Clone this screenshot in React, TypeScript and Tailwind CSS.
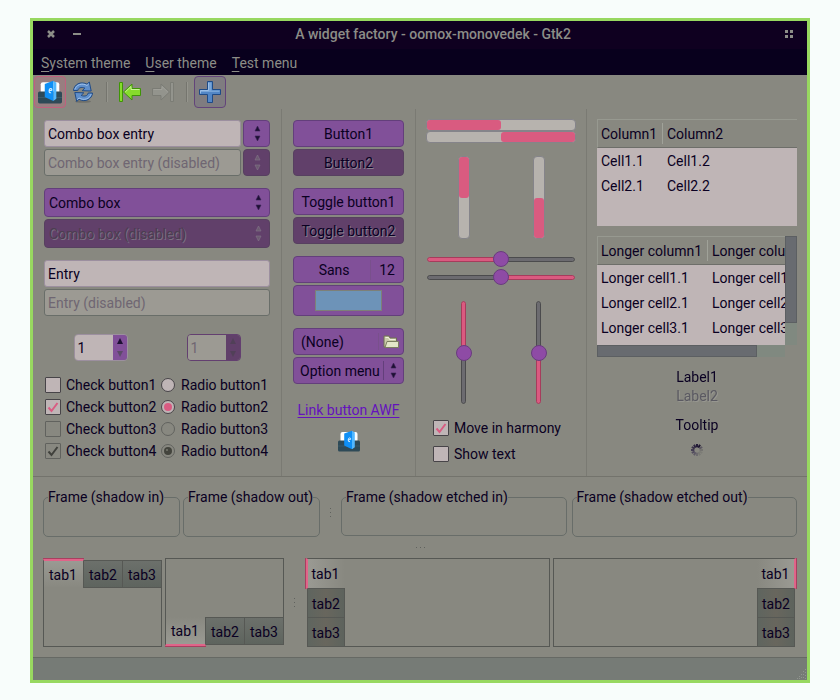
import React, { useState } from "react";

type Kids = { children?: React.ReactNode };

const emboss = "[text-shadow:1px_1px_0_#8a8090]";

/* ---------- small drawings ---------- */

function UpDown({ dim = false, className = "" }: { dim?: boolean; className?: string }) {
  return (
    <svg width="9" height="17" viewBox="0 0 9 17" aria-hidden="true" className={className}>
      <path d="M4.500 1 7 6H2z" fill={dim ? "#6b5a70" : "#1d1033"} stroke={dim ? "#85758a" : "#3b2258"} strokeWidth="0.6" />
      <path d="M4.500 16 7 11H2z" fill={dim ? "#6b5a70" : "#1d1033"} stroke={dim ? "#85758a" : "#3b2258"} strokeWidth="0.6" />
    </svg>
  );
}

function DoorIcon({ size = 22 }: { size?: number }) {
  return (
    <svg width={size} height={size} viewBox="0 0 22 22" aria-hidden="true">
      <rect x="2.500" y="2" width="17" height="11" rx="2" fill="#fdfdfd" />
      <path d="M0 12Q0 10.500 1.500 10.500h19q1.500 0 1.500 1.500v8q0 1.500-1.500 1.500h-19Q0 21.500 0 20z" fill="#2e4a57" />
      <path d="M0 15.600h22v.8H0z" fill="#3d5f6d" />
      <path d="M6.200 3.600 14 .8v18.400L6.200 15.600z" fill="#0f8ff5" />
      <path d="M14 .8l2.800 1.800v14.600L14 19.200z" fill="#52b8ff" />
      <path d="M12 11.600q-1.800.6-1.800-1.600t1.600-2.100q1.200.2.8 1.500l-2.200.5" stroke="#d8f0ff" strokeWidth="1" fill="none" />
    </svg>
  );
}

function RefreshIcon() {
  return (
    <svg width="22" height="22" viewBox="0 0 22 22" aria-hidden="true">
      <ellipse cx="11" cy="20.500" rx="8" ry="1.300" fill="#70706a" />
      <g stroke="#1f4a86" strokeWidth="1" strokeLinejoin="round" fill="#5f8fcb">
        <path d="M1.500 9.500C2 3.500 8.500-.2 15 3.200L17.300 1l1.900 9-9-.3 2.600-2.600C9.300 5.600 6.300 6.800 5.800 9.500z" />
        <path d="M20.500 12c-.5 6-7 9.700-13.500 6.300L4.700 20.500l-1.900-9 9 .3-2.600 2.600c3.500 1.500 6.500.3 7-2.400z" />
      </g>
      <path d="M2.800 8.500C4.200 3.800 9.800 1.500 15 4.500l1.700-1.600M19.200 13c-1.400 4.700-7 7-12.200 4l-1.700 1.600" stroke="#a6c6ec" strokeWidth="0.9" fill="none" />
    </svg>
  );
}

function JumpArrow({ kind }: { kind: "first" | "last" }) {
  const live = kind === "first";
  return (
    <svg width="24" height="22" viewBox="0 0 24 22" aria-hidden="true" className={live ? "" : "-scale-x-100 opacity-60"}>
      <g fill={live ? "#86dc2c" : "#9b9c96"} stroke={live ? "#3f9406" : "#73756f"} strokeWidth="1" strokeLinejoin="round">
        <path d="M1.500 1.500h3v19h-3z" />
        <path d="M5.500 11 14 3v4.500h8.500v7H14V19z" />
      </g>
      <path d="M7.200 11 13 5.500v3h8.500" stroke={live ? "#c9f596" : "#b0b1ab"} strokeWidth="1" fill="none" />
    </svg>
  );
}

function PlusIcon() {
  return (
    <svg width="22" height="22" viewBox="0 0 22 22" aria-hidden="true">
      <path d="M8.500.5h5v8h8v5h-8v8h-5v-8h-8v-5h8z" fill="#5286c6" stroke="#1f4a86" />
      <path d="M9.500 1.500h3v8h8v1.500h-19V9.500h8z" fill="#79a5d8" />
      <path d="M9.500 1.500v8h-8v3" stroke="#a9c8ec" fill="none" strokeWidth="0.800" />
    </svg>
  );
}

function FolderIcon() {
  return (
    <svg width="16" height="14" viewBox="0 0 16 14" aria-hidden="true">
      <path d="M1 1h5l1 2h6.500v9H1z" fill="#c9cba8" stroke="#6f7153" />
      <path d="M2 12.500 4 6.500h11.500v6z" fill="#e3e5c8" stroke="#7b7d60" />
      <path d="M2.500 2.500h3l1 2h6" stroke="#f1f2de" fill="none" />
    </svg>
  );
}

function SpinnerIcon() {
  const shades = ["#241c38", "#1c1430", "#5a5660", "#747370", "#7c7c76", "#787874", "#6c6a6e", "#5f5b66", "#524c5e", "#453e54", "#393148", "#2e2540"];
  return (
    <svg width="12" height="12" viewBox="0 0 12 12" role="img" aria-label="Working">
      {shades.map((c, i) => (
        <path key={i} d="M6 0v3.300" stroke={c} strokeWidth="2" transform={`rotate(${i * 30} 6 6)`} />
      ))}
    </svg>
  );
}

/* ---------- controls ---------- */

function PushButton({ children, dim = false, className = "" }: Kids & { dim?: boolean; className?: string }) {
  const tone = dim ? "bg-[#61406a] border-[#574060] " + emboss : "bg-[#815099] border-[#633f7b]";
  return (
    <button type="button" className={`flex h-[27px] w-full items-center justify-center rounded-[4px] border whitespace-nowrap ${tone} ${className}`}>
      {children}
    </button>
  );
}

function TextEntry({ label, disabled = false }: { label: string; disabled?: boolean }) {
  return (
    <input
      type="text"
      aria-label={label}
      defaultValue={label}
      disabled={disabled}
      className={`h-[27px] w-full min-w-0 rounded-[3px] border px-[3px] ${
        disabled ? "border-[#696e69] bg-[#9c9a93] text-[#6f6672]" : "border-[#9c8f9f] bg-[#bfb5b6]"
      }`}
    />
  );
}

function ComboEntry({ label, disabled = false }: { label: string; disabled?: boolean }) {
  return (
    <div className="flex gap-[2px]">
      <TextEntry label={label} disabled={disabled} />
      <button
        type="button"
        aria-label={`${label} options`}
        disabled={disabled}
        className={`flex h-[27px] w-[27px] shrink-0 items-center justify-center rounded-[4px] border pl-px ${
          disabled ? "border-[#574060] bg-[#61406a]" : "border-[#633f7b] bg-[#815099]"
        }`}
      >
        <UpDown dim={disabled} />
      </button>
    </div>
  );
}

function Combo({ label, disabled = false }: { label: string; disabled?: boolean }) {
  return (
    <div className="grid items-center">
      <select
        aria-label={label}
        disabled={disabled}
        className={`col-start-1 row-start-1 h-[29px] w-full appearance-none rounded-[4px] border px-1 opacity-100 ${
          disabled
            ? "border-[#574060] bg-[#61406a] text-[#4b3d50] [text-shadow:1px_1px_0_#7d7082]"
            : "border-[#633f7b] bg-[#815099]"
        }`}
      >
        <option>{label}</option>
      </select>
      <UpDown dim={disabled} className="pointer-events-none col-start-1 row-start-1 mr-[7px] justify-self-end" />
    </div>
  );
}

function Spin({ disabled = false }: { disabled?: boolean }) {
  const [value, setValue] = useState(1);
  const up = disabled ? "#514058" : "#1d1033";
  const down = disabled ? "#514058" : "#5b4a68";
  return (
    <div className={`flex h-[27px] w-[54px] overflow-hidden rounded-[4px] border ${disabled ? "border-[#633f70] text-[#6f6672]" : "border-[#9c8f9f]"}`}>
      <input
        type="text"
        aria-label={disabled ? "Number (disabled)" : "Number"}
        value={value}
        onChange={(e) => setValue(Number(e.target.value) || 0)}
        disabled={disabled}
        className={`w-full min-w-0 px-[3px] ${disabled ? "bg-[#9c9a93]" : "bg-[#bfb5b6]"}`}
      />
      <div className={`flex w-[14px] shrink-0 flex-col ${disabled ? "bg-[#61406a]" : "bg-[#815099]"}`}>
        <button type="button" aria-label="Increase" disabled={disabled} onClick={() => setValue(value + 1)} className="flex flex-1 items-center justify-center">
          <svg width="6" height="6" viewBox="0 0 6 6"><path d="M3 0 6 6H0z" fill={up} /></svg>
        </button>
        <button type="button" aria-label="Decrease" disabled={disabled} onClick={() => setValue(value - 1)} className="flex flex-1 items-center justify-center">
          <svg width="6" height="6" viewBox="0 0 6 6"><path d="M3 6 6 0H0z" fill={down} /></svg>
        </button>
      </div>
    </div>
  );
}

function Check({ label, checked = false, disabled = false }: { label: string; checked?: boolean; disabled?: boolean }) {
  return (
    <label className="flex items-center gap-[5px] whitespace-nowrap">
      <span className="grid size-4 shrink-0">
        <input
          type="checkbox"
          defaultChecked={checked}
          disabled={disabled}
          className={`peer col-start-1 row-start-1 size-4 appearance-none rounded-[1px] border ${
            disabled ? "border-[#61625e]" : "border-[#474448] bg-[#bfb5b6]"
          }`}
        />
        <svg viewBox="0 0 16 16" aria-hidden="true" className="pointer-events-none invisible col-start-1 row-start-1 size-4 peer-checked:visible">
          <path d="M3.500 8.500 6.500 12 12.500 4" fill="none" stroke={disabled ? "#40413c" : "#d95b82"} strokeWidth="2" />
        </svg>
      </span>
      {label}
    </label>
  );
}

function Radio({ label, name, checked = false, disabled = false }: { label: string; name: string; checked?: boolean; disabled?: boolean }) {
  return (
    <label className="flex items-center gap-[6px] whitespace-nowrap">
      <span className="grid size-[14px] shrink-0">
        <input
          type="radio"
          name={name}
          defaultChecked={checked}
          disabled={disabled}
          className={`peer col-start-1 row-start-1 size-[14px] appearance-none rounded-full border ${
            disabled ? "border-[#61625e]" : "border-[#474448] bg-[#bfb5b6]"
          }`}
        />
        <svg viewBox="0 0 14 14" aria-hidden="true" className="pointer-events-none invisible col-start-1 row-start-1 size-[14px] peer-checked:visible">
          <circle cx="7" cy="7" r="4" fill={disabled ? "#43443d" : "#d95b82"} />
          {disabled && <circle cx="6" cy="6" r="1" fill="#77786f" />}
        </svg>
      </span>
      {label}
    </label>
  );
}

function Progress({ label, vertical = false, reverse = false }: { label: string; vertical?: boolean; reverse?: boolean }) {
  return (
    <div
      role="progressbar"
      aria-label={label}
      aria-valuenow={50}
      className={`flex rounded-[4px] border border-[#85848a] bg-[#b7b3ae] ${vertical ? "h-[83px] w-3 flex-col" : "h-3 w-full"} ${
        reverse ? "justify-end" : "justify-start"
      }`}
    >
      <div className={`rounded-[3px] bg-[#d95b80] ${vertical ? "h-1/2 w-full" : "h-full w-1/2"}`} />
    </div>
  );
}

const thumb =
  "[&::-webkit-slider-thumb]:size-4 [&::-webkit-slider-thumb]:appearance-none [&::-webkit-slider-thumb]:rounded-full [&::-webkit-slider-thumb]:border [&::-webkit-slider-thumb]:border-[#693c7e] [&::-webkit-slider-thumb]:bg-[#8e4ba5]";

function Slider({ label, vertical = false, reverse = false }: { label: string; vertical?: boolean; reverse?: boolean }) {
  const full = "flex-1 border border-[#a63c5c] bg-[#da5a80]";
  const empty = "flex-1 border border-[#4b4b4d] bg-[#6c6b70]";
  return (
    <div className={`grid place-items-center ${vertical ? "h-[103px] w-4" : "h-4 w-full"}`}>
      <div className={`col-start-1 row-start-1 flex overflow-hidden rounded-[3px] ${vertical ? "h-[103px] w-[5px] flex-col" : "h-[5px] w-full"}`}>
        <div className={`${vertical ? "rounded-t-[3px]" : "rounded-l-[3px]"} ${reverse ? empty : full}`} />
        <div className={`${vertical ? "rounded-b-[3px]" : "rounded-r-[3px]"} ${reverse ? full : empty}`} />
      </div>
      <input
        type="range"
        aria-label={label}
        defaultValue={50}
        className={`col-start-1 row-start-1 m-0 appearance-none bg-transparent ${thumb} ${
          vertical ? "h-[103px] w-4 [writing-mode:vertical-lr]" : "h-4 w-full"
        }`}
      />
    </div>
  );
}

/* ---------- data tables ---------- */

function DataTable({ head, rows, first }: { head: string[]; rows: string[][]; first: string }) {
  return (
    <table className="w-full border-separate border-spacing-0 text-left whitespace-nowrap">
      <thead className="bg-[#888880]">
        <tr>
          {head.map((h, i) => (
            <th key={h} className={`h-[29px] border-t border-b border-t-[#979990] border-b-[#6d6e69] p-0 font-normal ${i === 0 ? "border-l border-l-[#979990] " + first : ""}`}>
              <div className={`h-[21px] pt-px ${i === 0 ? "border-r border-[#a0a299] pl-[3px]" : "pl-1"}`}>{h}</div>
            </th>
          ))}
        </tr>
      </thead>
      <tbody>
        {rows.map((r) => (
          <tr key={r[0]}>
            {r.map((c) => (
              <td key={c} className="h-[25px] p-0 pl-1">{c}</td>
            ))}
          </tr>
        ))}
      </tbody>
    </table>
  );
}

/* ---------- notebooks ---------- */

const edge = "border-[#565854]";

function TopNotebook({ flip = false }: { flip?: boolean }) {
  const idle = `h-[28px] w-[39px] border-y border-r pt-px ${edge} bg-linear-to-b from-[#6c706b] to-[#5e645e]`;
  return (
    <div className={`flex h-[89px] min-w-0 ${flip ? "flex-col-reverse" : "flex-col"}`}>
      <div role="tablist" className={`flex h-[30px] ${flip ? "items-start" : "items-end"}`}>
        <div className={`flex h-[30px] w-[41px] border-[#a83f60] ${flip ? "border-b" : "border-t"}`}>
          <button
            type="button"
            role="tab"
            aria-selected="true"
            className={`w-full border-x border-x-[#565854] border-y-[#e06489] pr-px ${
              flip
                ? "border-b-2 bg-linear-to-t from-[#9a9a93] to-[#888880] pt-px"
                : "border-t-2 bg-linear-to-b from-[#9a9a93] to-[#888880]"
            }`}
          >
            tab1
          </button>
        </div>
        <button type="button" role="tab" className={idle}>tab2</button>
        <button type="button" role="tab" className={idle}>tab3</button>
        <div className={`h-[30px] flex-1 ${flip ? "border-t" : "border-b"} ${edge}`} />
      </div>
      <div className={`flex-1 border-x ${flip ? "border-t" : "border-b"} ${edge}`} />
    </div>
  );
}

function SideNotebook({ flip = false }: { flip?: boolean }) {
  const idle = `h-[29px] w-[38px] border-x border-b pt-px ${edge} bg-linear-to-r from-[#5f655f] via-[#68665d] to-[#5d635d]`;
  return (
    <div className={`flex h-[89px] min-w-0 ${flip ? "flex-row-reverse" : "flex-row"}`}>
      <div role="tablist" className={`flex w-[40px] shrink-0 flex-col ${flip ? "items-start" : "items-end"}`}>
        <div className={`flex h-[31px] w-full border-[#a83f60] ${flip ? "border-r" : "border-l"}`}>
          <button
            type="button"
            role="tab"
            aria-selected="true"
            className={`w-full border-y border-y-[#565854] ${
              flip
                ? "border-r-2 border-r-[#e06489] bg-linear-to-l from-[#9a9a93] to-[#888880]"
                : "border-l-2 border-l-[#e06489] bg-linear-to-r from-[#9a9a93] to-[#888880] pr-[2px]"
            }`}
          >
            tab1
          </button>
        </div>
        <button type="button" role="tab" className={idle}>tab2</button>
        <button type="button" role="tab" className={idle}>tab3</button>
      </div>
      <div className={`flex-1 border-y ${flip ? "border-l" : "border-r"} ${edge}`} />
    </div>
  );
}

function Frame({ title, className }: { title: string; className: string }) {
  return (
    <fieldset className={`min-w-0 rounded-[5px] border border-[#686d69] pl-1 ${className}`}>
      <legend className="h-5 whitespace-nowrap">{title}</legend>
    </fieldset>
  );
}

function Grip({ across = false }: { across?: boolean }) {
  return (
    <div className={`flex items-center justify-center gap-[3px] ${across ? "h-[21px]" : "flex-col"}`}>
      <i className="size-px bg-[#60625e]" />
      <i className="size-px bg-[#60625e]" />
      <i className="size-px bg-[#60625e]" />
    </div>
  );
}

function MenuItem({ text }: { text: string }) {
  return (
    <button type="button" className="pl-2 pr-[7px] whitespace-nowrap">
      <span className="underline underline-offset-3">{text[0]}</span>
      {text.slice(1)}
    </button>
  );
}

function ToolSeparator() {
  return (
    <div className="flex w-[13px] justify-center">
      <div className="h-5 w-[2px] border-l border-[#75756e] bg-[#96968e]" />
    </div>
  );
}

export default function App() {
  return (
    <div className="min-h-screen bg-[#f8fdfb] px-[30px] pt-[18px] pb-[17px] font-['Roboto',sans-serif] text-[14px] leading-5 text-[#0a0022]">
      <main className="border-[3px] border-[#98d860] bg-[#888880]">
        <header className="flex h-7 items-center bg-[#0f0020] pb-[2px] text-[#8c8d87]">
          <div className="flex w-[61px] items-center gap-[18px] pl-[14px]">
            <button type="button" aria-label="Close">
              <svg width="8" height="8" viewBox="0 0 8 8"><path d="M1 1 7 7M7 1 1 7" stroke="currentColor" strokeWidth="2.500" /></svg>
            </button>
            <button type="button" aria-label="Minimize">
              <svg width="8" height="8" viewBox="0 0 8 8"><path d="M0 4h8" stroke="currentColor" strokeWidth="2" /></svg>
            </button>
          </div>
          <h1 className="flex-1 text-center font-medium whitespace-nowrap">A widget factory - oomox-monovedek - Gtk2</h1>
          <div className="flex w-[35px] pl-[13px]">
            <button type="button" aria-label="Maximize">
              <svg width="8" height="8" viewBox="0 0 8 8" fill="currentColor"><path d="M0 0h3v3H0zM5 0h3v3H5zM0 5h3v3H0zM5 5h3v3H5z" /></svg>
            </button>
          </div>
        </header>

        <nav className="flex h-[26px] items-center bg-[#08001d] pt-[2px] text-[#8c8d87]">
          <MenuItem text="System theme" />
          <MenuItem text="User theme" />
          <MenuItem text="Test menu" />
        </nav>

        <div role="toolbar" className="flex h-[34px] items-center gap-px pl-px">
          <button type="button" aria-label="Theme" className="flex size-8 items-center justify-center rounded-[4px] border border-[#c0607e] bg-[#987e80]">
            <DoorIcon size={24} />
          </button>
          <button type="button" aria-label="Refresh" className="flex size-8 items-center justify-center"><RefreshIcon /></button>
          <ToolSeparator />
          <button type="button" aria-label="Go first" className="flex size-8 items-center justify-center"><JumpArrow kind="first" /></button>
          <button type="button" aria-label="Go last" disabled className="flex size-8 items-center justify-center"><JumpArrow kind="last" /></button>
          <ToolSeparator />
          <button type="button" aria-label="Add" aria-pressed="true" className="flex size-8 items-center justify-center rounded-[4px] border border-[#63447a] bg-[#7f7c80]">
            <PlusIcon />
          </button>
        </div>

        <div className="grid grid-cols-[249fr_134fr_171fr_220fr] border-b border-[#73736c]">
          <section className="min-w-0 border-r border-[#7a7a73] px-[11px] pt-[11px] pb-[14px]">
            <div className="flex flex-col gap-3">
              <div className="flex flex-col gap-[2px]">
                <ComboEntry label="Combo box entry" />
                <ComboEntry label="Combo box entry (disabled)" disabled />
              </div>
              <div className="flex flex-col gap-[2px]">
                <Combo label="Combo box" />
                <Combo label="Combo box (disabled)" disabled />
              </div>
              <div className="flex flex-col gap-[2px]">
                <TextEntry label="Entry" />
                <TextEntry label="Entry (disabled)" disabled />
              </div>
            </div>
            <div className="mt-[18px] grid grid-cols-2 justify-items-center">
              <Spin />
              <Spin disabled />
            </div>
            <div className="mt-[13px] grid auto-rows-[22px] grid-cols-[116px_auto] items-center pl-px">
              <Check label="Check button1" />
              <Radio name="live" label="Radio button1" />
              <Check label="Check button2" checked />
              <Radio name="live" label="Radio button2" checked />
              <Check label="Check button3" disabled />
              <Radio name="off" label="Radio button3" disabled />
              <Check label="Check button4" checked disabled />
              <Radio name="off" label="Radio button4" checked disabled />
            </div>
          </section>

          <section className="min-w-0 border-r border-[#7a7a73] px-[11px] pt-[11px]">
            <div className="flex flex-col gap-3">
              <div className="flex flex-col gap-[2px]">
                <PushButton>Button1</PushButton>
                <PushButton dim>Button2</PushButton>
              </div>
              <div className="flex flex-col gap-[2px]">
                <PushButton>Toggle button1</PushButton>
                <PushButton dim>Toggle button2</PushButton>
              </div>
              <div className="flex flex-col gap-[2px]">
                <PushButton>
                  <span className="flex-1 pl-1 text-center">Sans</span>
                  <span className="border-l border-[#79508c] px-2">12</span>
                </PushButton>
                <button type="button" aria-label="Pick a color" className="flex h-[31px] w-full items-center justify-center rounded-[4px] border border-[#633f7b] bg-[#815099]">
                  <span className="h-[21px] w-[67px] border border-[#7d8078] bg-[#6d93b8]" />
                </button>
              </div>
              <div className="flex flex-col gap-[2px]">
                <PushButton>
                  <span className="flex-1 pl-[7px] text-left">(None)</span>
                  <span className="flex h-[17px] items-center border-l border-[#79508c] px-1"><FolderIcon /></span>
                </PushButton>
                <PushButton>
                  <span className="flex-1 pl-[6px] text-left">Option menu</span>
                  <span className="flex h-[19px] items-center border-l border-[#633f7b] px-[5px]"><UpDown /></span>
                </PushButton>
              </div>
            </div>
            <div className="mt-4 flex flex-col items-center gap-[10px]">
              <a href="#awf" className="whitespace-nowrap text-[#6412bd] underline underline-offset-2">Link button AWF</a>
              <DoorIcon />
            </div>
          </section>

          <section className="min-w-0 border-r border-[#7a7a73] px-[10px] pt-[10px]">
            <div className="flex flex-col">
              <Progress label="Left to right" />
              <Progress label="Right to left" reverse />
            </div>
            <div className="mt-[13px] grid grid-cols-2 justify-items-center">
              <Progress label="Top to bottom" vertical />
              <Progress label="Bottom to top" vertical reverse />
            </div>
            <div className="mt-3 flex flex-col gap-[2px] px-px">
              <Slider label="Horizontal scale" />
              <Slider label="Horizontal scale, inverted" reverse />
            </div>
            <div className="mt-4 grid grid-cols-2 justify-items-center">
              <Slider label="Vertical scale" vertical />
              <Slider label="Vertical scale, inverted" vertical reverse />
            </div>
            <div className="mt-[11px] grid auto-rows-[26px] items-center pl-[7px]">
              <Check label="Move in harmony" checked />
              <Check label="Show text" />
            </div>
          </section>

          <section className="min-w-0 px-[10px] pt-[10px]">
            <div className="h-[107px] overflow-hidden bg-[#bfb5b6]">
              <DataTable first="w-[66px]" head={["Column1", "Column2"]} rows={[["Cell1.1", "Cell1.2"], ["Cell2.1", "Cell2.2"]]} />
            </div>
            <div className="mt-[10px] grid grid-cols-[1fr_12px] grid-rows-[109px_12px]">
              <div className="min-w-0 overflow-x-auto overflow-y-hidden bg-[#bfb5b6] [scrollbar-width:none]">
                <DataTable
                  first="w-[111px] min-w-[111px]"
                  head={["Longer column1", "Longer column2"]}
                  rows={[
                    ["Longer cell1.1", "Longer cell1.2"],
                    ["Longer cell2.1", "Longer cell2.2"],
                    ["Longer cell3.1", "Longer cell3.2"],
                  ]}
                />
              </div>
              <div className="bg-[#808980]">
                <div className="h-4/5 border border-[#5c5f62] bg-[#686b70]" />
              </div>
              <div className="bg-[#808980]">
                <div className="h-full w-[85%] border border-[#5c5f62] bg-[#686b70]" />
              </div>
            </div>
            <div className="mt-[11px] flex flex-col items-center leading-[19px]">
              <p>Label1</p>
              <p className="text-[#5b5a62] [text-shadow:1px_1px_0_#979790]">Label2</p>
              <p className="mt-[10px] mb-[9px]">Tooltip</p>
              <SpinnerIcon />
            </div>
          </section>
        </div>

        <section className="px-[10px] py-[10px]">
          <div className="grid grid-cols-[277fr_21px_456fr]">
            <div className="grid grid-cols-2 gap-[3px]">
              <Frame title="Frame (shadow in)" className="h-[50px]" />
              <Frame title="Frame (shadow out)" className="h-[50px]" />
            </div>
            <Grip />
            <div className="grid grid-cols-2 gap-[5px]">
              <Frame title="Frame (shadow etched in)" className="h-[49px]" />
              <Frame title="Frame (shadow etched out)" className="h-[50px]" />
            </div>
          </div>
          <Grip across />
          <div className="grid grid-cols-[241fr_21px_492fr]">
            <div className="grid grid-cols-2 gap-[3px]">
              <TopNotebook />
              <TopNotebook flip />
            </div>
            <Grip />
            <div className="grid grid-cols-2 gap-[3px]">
              <SideNotebook />
              <SideNotebook flip />
            </div>
          </div>
        </section>

        <footer className="flex h-[23px] items-end justify-end border-t border-[#666964] bg-[#767b76]">
          <svg width="11" height="11" viewBox="0 0 11 11" aria-hidden="true" fill="#90958f">
            <path d="M9 0h1v1H9zM7 2h1v1H7zM9 3h1v1H9zM5 5h1v1H5zM7 5h1v1H7zM9 6h1v1H9zM3 7h1v1H3zM5 8h1v1H5zM7 8h1v1H7zM9 9h1v1H9zM1 9h1v1H1zM3 9h1v1H3z" />
          </svg>
        </footer>
      </main>
    </div>
  );
}
